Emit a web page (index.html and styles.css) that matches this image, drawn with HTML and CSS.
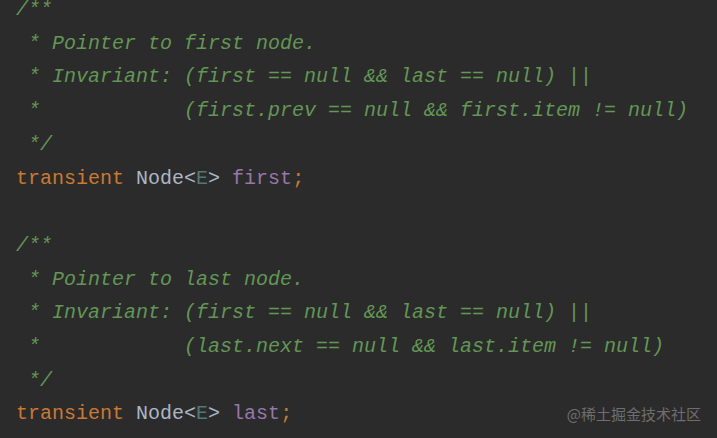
FILE: index.html
```html
<!DOCTYPE html>
<html lang="zh">
<head>
<meta charset="utf-8">
<link rel="stylesheet" href="styles.css">
</head>
<body>
<main class="editor">
<pre class="code"><span class="doc">/**
 * Pointer to first node.
 * Invariant: (first == null &amp;&amp; last == null) ||
 *            (first.prev == null &amp;&amp; first.item != null)
 */</span>
<span class="kw">transient</span> <span class="type">Node&lt;<span class="tp">E</span>&gt;</span> <span class="field">first</span><span class="kw">;</span>

<span class="doc">/**
 * Pointer to last node.
 * Invariant: (first == null &amp;&amp; last == null) ||
 *            (last.next == null &amp;&amp; last.item != null)
 */</span>
<span class="kw">transient</span> <span class="type">Node&lt;<span class="tp">E</span>&gt;</span> <span class="field">last</span><span class="kw">;</span></pre>
<div class="watermark">@稀土掘金技术社区</div>
</main>
</body>
</html>
```

FILE: styles.css
```css
html, body {
  margin: 0;
  padding: 0;
  background: #2b2b2b;
}
.editor {
  position: relative;
  width: 717px;
  height: 438px;
  overflow: hidden;
  background: #2b2b2b;
}
.code {
  margin: -7px 0 0 0;
  padding: 0 0 0 16px;
  font-family: "Liberation Mono", "DejaVu Sans Mono", monospace;
  font-size: 20px;
  line-height: 33.7px;
  color: #a9b7c6;
}
.doc {
  color: #629755;
  font-style: italic;
}
.kw {
  color: #cc7832;
}
.type {
  color: #a9b7c6;
}
.tp {
  color: #507874;
}
.field {
  color: #9876aa;
}
.watermark {
  position: absolute;
  right: 16px;
  bottom: 14px;
  font-family: "Noto Sans CJK SC", "Noto Sans", sans-serif;
  font-size: 15px;
  color: #6e6e6e;
}
```
